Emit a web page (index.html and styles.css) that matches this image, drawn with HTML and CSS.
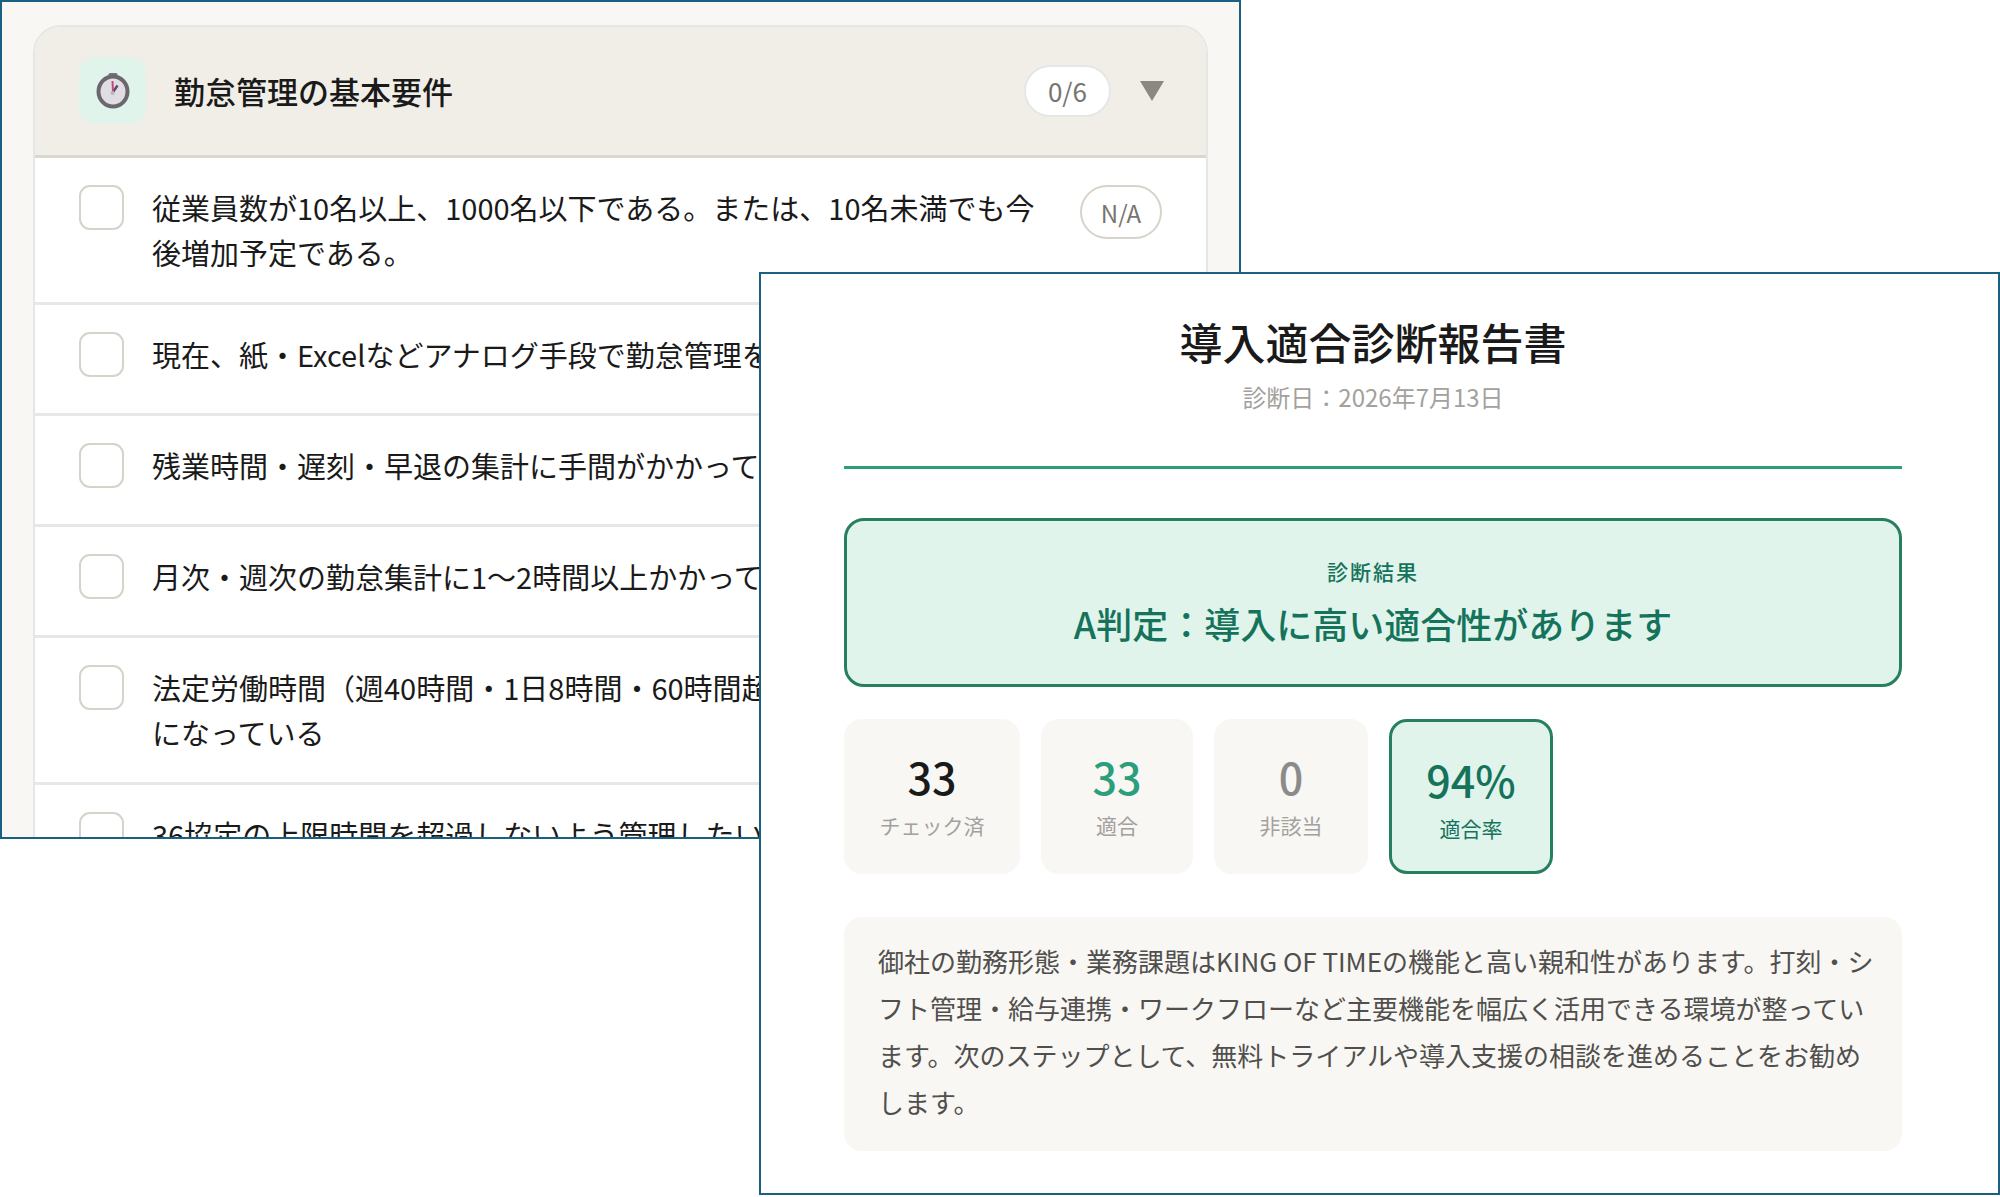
FILE: index.html
```html
<!DOCTYPE html>
<html lang="ja">
<head>
<meta charset="utf-8">
<meta name="viewport" content="width=device-width, initial-scale=1">
<title>導入適合診断</title>
<link rel="stylesheet" href="styles.css">
</head>
<body>
<main class="stage">
  <section class="window checklist">
    <div class="card">
      <header class="card-head">
        <span class="icon-box">
          <svg width="36" height="38" viewBox="0 0 36 38" aria-hidden="true">
            <path d="M15 2.500h6" stroke="#77747a" stroke-width="3" stroke-linecap="round"/>
            <ellipse cx="18" cy="19.500" rx="14.500" ry="15" fill="#e0dee2" stroke="#6b686d" stroke-width="4"/>
            <path d="M18 20L22.500 13.500" stroke="#5a4a78" stroke-width="2.500"/>
            <path d="M18 20L17.500 9" stroke="#c0506a" stroke-width="2"/>
            <circle cx="17.500" cy="21" r="2" fill="#b4b6c0"/>
          </svg>
        </span>
        <h2 class="card-title">勤怠管理の基本要件</h2>
        <span class="count">0/6</span>
        <button class="toggle" type="button" aria-label="折りたたむ">
          <svg width="24" height="20" viewBox="0 0 24 20" aria-hidden="true"><path d="M0 0h24L12 20z" fill="#8a8880"/></svg>
        </button>
      </header>
      <ul class="items">
        <li class="item">
          <input class="check" type="checkbox" id="c1">
          <label class="item-text" for="c1">従業員数が10名以上、1000名以下である。または、10名未満でも今後増加予定である。</label>
          <button class="na" type="button">N/A</button>
        </li>
        <li class="item">
          <input class="check" type="checkbox" id="c2">
          <label class="item-text" for="c2">現在、紙・Excelなどアナログ手段で勤怠管理を</label>
          <button class="na" type="button">N/A</button>
        </li>
        <li class="item">
          <input class="check" type="checkbox" id="c3">
          <label class="item-text" for="c3">残業時間・遅刻・早退の集計に手間がかかって</label>
          <button class="na" type="button">N/A</button>
        </li>
        <li class="item">
          <input class="check" type="checkbox" id="c4">
          <label class="item-text" for="c4">月次・週次の勤怠集計に1〜2時間以上かかって</label>
          <button class="na" type="button">N/A</button>
        </li>
        <li class="item">
          <input class="check" type="checkbox" id="c5">
          <label class="item-text" for="c5">法定労働時間（週40時間・1日8時間・60時間超<br>になっている</label>
          <button class="na" type="button">N/A</button>
        </li>
        <li class="item">
          <input class="check" type="checkbox" id="c6">
          <label class="item-text" for="c6">36協定の上限時間を超過しないよう管理したい</label>
        </li>
      </ul>
    </div>
  </section>

  <section class="window report">
    <header class="report-head">
      <h1 class="report-title">導入適合診断報告書</h1>
      <p class="report-date">診断日：2026年7月13日</p>
    </header>
    <div class="verdict">
      <p class="verdict-label">診断結果</p>
      <p class="verdict-text">A判定：導入に高い適合性があります</p>
    </div>
    <div class="stats">
      <div class="stat">
        <span class="stat-num">33</span>
        <span class="stat-label">チェック済</span>
      </div>
      <div class="stat stat-match">
        <span class="stat-num">33</span>
        <span class="stat-label">適合</span>
      </div>
      <div class="stat stat-none">
        <span class="stat-num">0</span>
        <span class="stat-label">非該当</span>
      </div>
      <div class="stat stat-rate">
        <span class="stat-num">94%</span>
        <span class="stat-label">適合率</span>
      </div>
    </div>
    <p class="summary">御社の勤務形態・業務課題はKING OF TIMEの機能と高い親和性があります。打刻・シフト管理・給与連携・ワークフローなど主要機能を幅広く活用できる環境が整っています。次のステップとして、無料トライアルや導入支援の相談を進めることをお勧めします。</p>
  </section>
</main>
</body>
</html>
```
FILE: styles.css
```css
* {
  box-sizing: border-box;
}

body {
  margin: 0;
  background: #fff;
  color: #1a1a1a;
  font-family: "Noto Sans CJK JP", "Noto Sans", sans-serif;
}

h1, h2, p, ul {
  margin: 0;
  padding: 0;
}

/* The report window overlaps the lower right of the checklist window */
.stage {
  display: grid;
  grid-template-columns: 37.95% 24.1% 37.95%;
  grid-template-rows: 272px 567px auto;
}

.window {
  border: 2px solid #1b6083;
  min-width: 0;
}

/* Checklist */
.checklist {
  grid-area: 1 / 1 / 3 / 3;
  min-height: 0;
  overflow: hidden;
  padding: 23px 31px 0;
  background: #f8f7f3;
}

.card {
  border: 2px solid #e5e6e6;
  border-radius: 28px;
  background: #fff;
  overflow: hidden;
}

.card-head {
  display: flex;
  align-items: center;
  padding: 30px 42px 31px 44px;
  border-bottom: 3px solid #dad8ce;
  background: #f1eee8;
}

.icon-box {
  display: grid;
  place-items: center;
  width: 67px;
  height: 67px;
  margin-right: 28px;
  border-radius: 16px;
  background: #e0f4ec;
}

.card-title {
  flex: 1;
  font-size: 31px;
  font-weight: 500;
  line-height: 45px;
}

.count {
  padding: 0 22px;
  border: 2px solid #e5e6e6;
  border-radius: 26px;
  background: #fff;
  color: #77756f;
  font-size: 26px;
  line-height: 48px;
}

.toggle {
  display: flex;
  margin-left: 29px;
  padding: 0;
  border: 0;
  background: none;
}

.items {
  list-style: none;
}

.item {
  display: flex;
  align-items: flex-start;
  gap: 28px;
  padding: 27px 44px;
  border-bottom: 3px solid #e7e7e7;
}

.check {
  flex: none;
  appearance: none;
  width: 45px;
  height: 45px;
  margin: 0;
  border: 2px solid #d6d3ca;
  border-radius: 11px;
  background: #fff;
}

.item-text {
  flex: 1;
  font-size: 29px;
  line-height: 45px;
}

.na {
  flex: none;
  width: 82px;
  height: 54px;
  padding: 0;
  border: 2px solid #d6d3ca;
  border-radius: 27px;
  background: #fff;
  color: #77756f;
  font-family: inherit;
  font-size: 24px;
}

/* Report */
.report {
  grid-area: 2 / 2 / 4 / 4;
  z-index: 1;
  padding: 37px 96px 42px 83px;
  background: #fff;
}

.report-head {
  padding-bottom: 51px;
  border-bottom: 3px solid #2b9f7b;
  text-align: center;
}

.report-title {
  font-size: 43px;
  font-weight: 500;
  line-height: 60px;
}

.report-date {
  margin-top: 8px;
  color: #a3a19d;
  font-size: 24px;
  line-height: 36px;
}

.verdict {
  margin-top: 49px;
  padding: 32px 30px 34px;
  border: 3px solid #26805f;
  border-radius: 20px;
  background: #e0f4ec;
  color: #16735b;
  text-align: center;
}

.verdict-label {
  font-size: 21px;
  font-weight: 500;
  letter-spacing: 2px;
  line-height: 36px;
}

.verdict-text {
  margin-top: 7px;
  font-size: 36px;
  font-weight: 500;
  line-height: 54px;
}

.stats {
  display: grid;
  grid-template-columns: 176px 152px 154px 164px;
  gap: 21px;
  margin-top: 32px;
}

.stat {
  display: flex;
  flex-direction: column;
  align-items: center;
  padding: 27px 0 26px;
  border-radius: 18px;
  background: #f8f7f3;
}

.stat-num {
  font-size: 43px;
  font-weight: 500;
  line-height: 60px;
}

.stat-label {
  margin-top: 2px;
  color: #a3a19d;
  font-size: 21px;
  line-height: 34px;
}

.stat-match .stat-num {
  color: #2b9f7b;
}

.stat-none .stat-num {
  color: #8b8b8b;
}

.stat-rate {
  border: 3px solid #26805f;
  background: #e0f4ec;
}

.stat-rate .stat-num,
.stat-rate .stat-label {
  color: #16735b;
}

.summary {
  margin-top: 43px;
  padding: 20px 22px 26px 34px;
  border-radius: 18px;
  background: #f8f7f3;
  color: #504f4d;
  font-size: 26px;
  line-height: 47px;
}
```
